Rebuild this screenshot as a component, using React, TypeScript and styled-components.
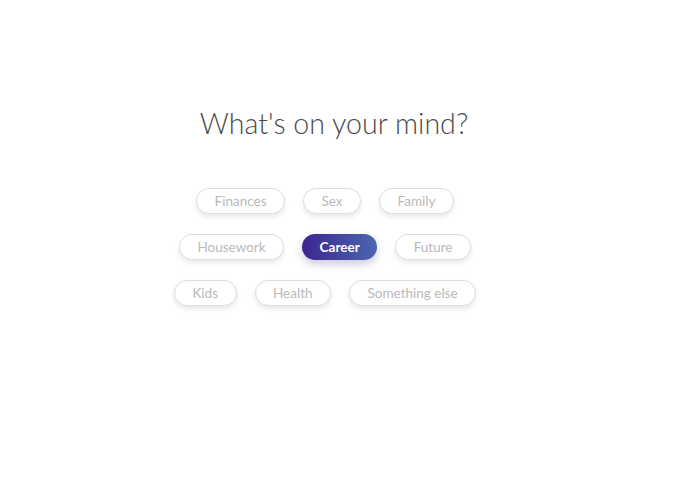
import React, { useState } from "react";
import styled, { createGlobalStyle } from "styled-components";

const Global = createGlobalStyle`
  html, body { margin: 0; padding: 0; background: #fff; }
  body { font-family: Lato, "Open Sans", sans-serif; }
`;

const Page = styled.div`
  width: 650px;
  height: 494px;
  display: flex;
  flex-direction: column;
  align-items: center;
  padding-top: 103px;
  box-sizing: border-box;
`;

const Title = styled.h1`
  margin: 0 0 45px 18px;
  font-family: Lato, sans-serif;
  font-weight: 300;
  font-size: 28.6px;
  line-height: 40px;
  color: #4a4a4a;
  letter-spacing: 0;
`;

const Rows = styled.div`
  display: flex;
  flex-direction: column;
  align-items: center;
  gap: 20px;
`;

const Row = styled.div`
  display: flex;
  gap: 18px;
`;

const Pill = styled.button<{ $active?: boolean }>`
  height: 26px;
  padding: 0 17.5px;
  border-radius: 13px;
  box-sizing: border-box;
  font-family: Lato, sans-serif;
  font-size: 13.5px;
  font-weight: ${(p) => (p.$active ? 700 : 400)};
  color: ${(p) => (p.$active ? "#fff" : "#b9b9b9")};
  background: ${(p) =>
    p.$active ? "linear-gradient(90deg, #3b2690 0%, #4c66b0 100%)" : "#fff"};
  border: ${(p) => (p.$active ? "none" : "1.5px solid #dedede")};
  box-shadow: ${(p) =>
    p.$active
      ? "0 4px 8px rgba(60, 40, 120, 0.25)"
      : "0 3px 5px rgba(0, 0, 0, 0.09)"};
  cursor: pointer;
  display: inline-flex;
  align-items: center;
  justify-content: center;
  outline: none;
`;

const rows = [
  ["Finances", "Sex", "Family"],
  ["Housework", "Career", "Future"],
  ["Kids", "Health", "Something else"],
];

export default function App() {
  const [active, setActive] = useState("Career");
  return (
    <>
      <Global />
      <Page>
        <Title>What's on your mind?</Title>
        <Rows>
          {rows.map((r, i) => (
            <Row key={i}>
              {r.map((t) => (
                <Pill key={t} $active={t === active} onClick={() => setActive(t)}>
                  {t}
                </Pill>
              ))}
            </Row>
          ))}
        </Rows>
      </Page>
    </>
  );
}
